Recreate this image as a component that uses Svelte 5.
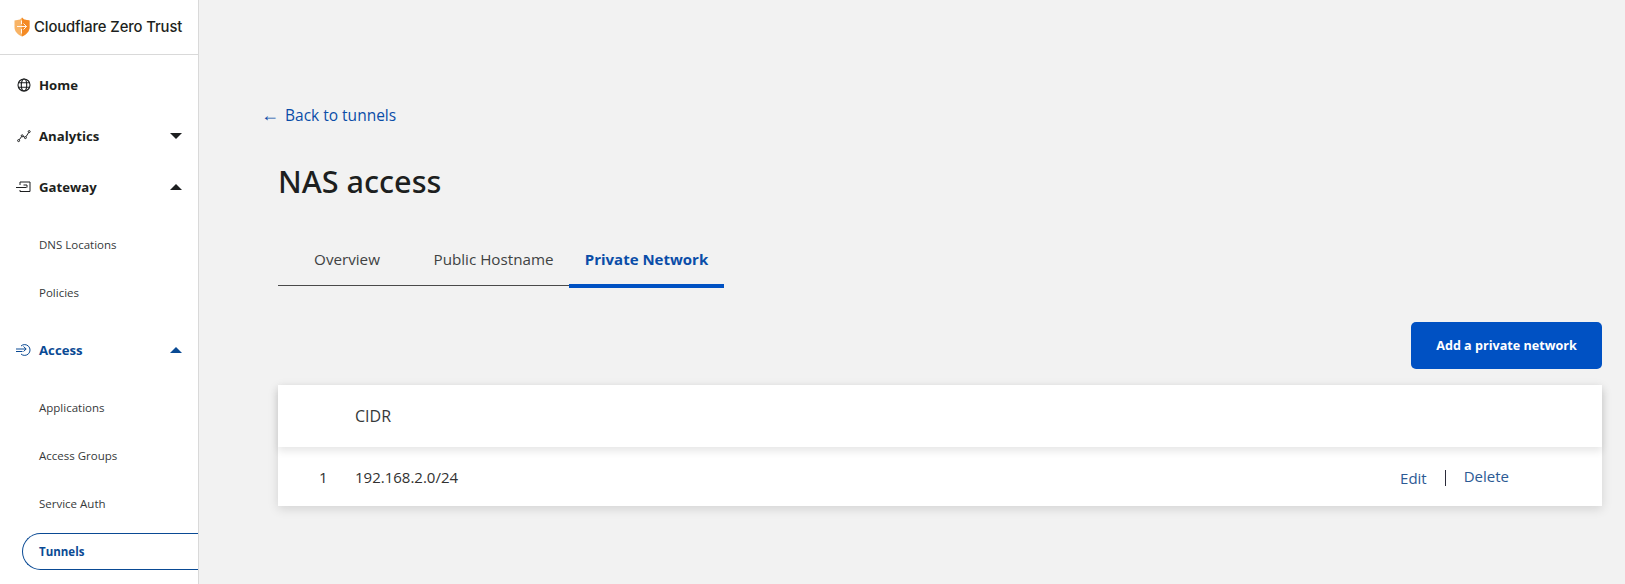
<script>
  const sub1 = ['DNS Locations', 'Policies'];
  const sub2 = ['Applications', 'Access Groups', 'Service Auth'];
</script>

<div class="page">
  <aside class="sidebar">
    <div class="brand">
      <svg class="logo" width="16" height="20" viewBox="0 0 16 20" aria-hidden="true">
        <path d="M8 0.5 L10 2.4 L15.5 3.4 V10.5 C15.5 14.5 12 17.8 8 19.5 C4 17.8 0.5 14.5 0.5 10.5 V3.4 L6 2.4 Z" fill="#f8b365"/>
        <path d="M8 0.5 L10 2.4 L15.5 3.4 V10.5 C15.5 14.5 12 17.8 8 19.5 Z" fill="#f48a24"/>
        <path d="M3 9.5 H12.5 M9.5 6.5 L12.5 9.5 L9.5 12.5 M7.5 3.5 V7 M7.5 12 V16.5" stroke="#fff" stroke-width="1" fill="none" opacity="0.9"/>
      </svg>
      <span>Cloudflare Zero Trust</span>
    </div>
    <nav class="nav">
      <div class="item top">
        <svg width="14" height="14" viewBox="0 0 14 14" fill="none" stroke="#1d1f20" stroke-width="1.1"><circle cx="7" cy="7" r="6"/><ellipse cx="7" cy="7" rx="2.7" ry="6"/><path d="M1.4 4.8H12.6M1.4 9.2H12.6"/></svg>
        <span>Home</span>
      </div>
      <div class="item top">
        <svg width="14" height="14" viewBox="0 0 14 14" fill="none" stroke="#1d1f20" stroke-width="1"><circle cx="1.6" cy="11.6" r="1"/><circle cx="5.2" cy="6.8" r="1"/><circle cx="8.4" cy="8.6" r="1"/><circle cx="12.2" cy="2.6" r="1"/><path d="M2.2 10.8L4.6 7.6M6.1 7.3L7.5 8.1M9 7.7L11.7 3.5"/></svg>
        <span>Analytics</span>
        <i class="caret down"></i>
      </div>
      <div class="item top">
        <svg width="16" height="14" viewBox="0 0 16 14" fill="none" stroke="#1d1f20" stroke-width="1"><path d="M4 5V2H14V11.5H4V10"/><path d="M0 7.5H10.5"/><path d="M7.5 5H11V7.5"/></svg>
        <span>Gateway</span>
        <i class="caret up"></i>
      </div>
      <div class="subs first">
        {#each sub1 as s}<div class="sub">{s}</div>{/each}
      </div>
      <div class="item top active">
        <svg width="16" height="14" viewBox="0 0 16 14" fill="none" stroke="#0a4a94" stroke-width="1"><path d="M5 3A5.4 5.4 0 1 1 5 11"/><path d="M0 6H10M7.5 3.5L10.2 6L7.5 8.5M0 8.5H6.5"/></svg>
        <span>Access</span>
        <i class="caret up blue"></i>
      </div>
      <div class="subs second">
        {#each sub2 as s}<div class="sub">{s}</div>{/each}
        <div class="sub current">Tunnels</div>
      </div>
    </nav>
  </aside>

  <main class="main">
    <a class="back" href="#top"><span class="arrow">←</span><span>Back to tunnels</span></a>
    <div class="content">
      <h1>NAS access</h1>
      <div class="tabs">
        <div class="tab t1">Overview</div>
        <div class="tab t2">Public Hostname</div>
        <div class="tab t3 selected">Private Network</div>
      </div>
      <div class="actions"><button>Add a private network</button></div>
      <div class="table">
        <div class="thead"><div class="num"></div><div class="cidr">CIDR</div></div>
        <div class="trow">
          <div class="num">1</div>
          <div class="cidr">192.168.2.0/24</div>
          <div class="ops"><a href="#top" class="edit">Edit</a><span class="sep"></span><a href="#top" class="del">Delete</a></div>
        </div>
      </div>
    </div>
  </main>
</div>

<style>
  :global(body) { margin: 0; background: #f2f2f2; }
  .page {
    display: flex; width: 1625px; height: 584px; overflow: hidden;
    font-family: "Open Sans", "Noto Sans", sans-serif; color: #1d1f20;
  }
  .sidebar {
    width: 198px; flex: none; background: #fff;
    border-right: 1px solid #d9d9d9; box-sizing: content-box;
  }
  .brand {
    height: 55px; box-sizing: border-box; border-bottom: 1px solid #d9d9d9;
    display: flex; align-items: center; gap: 4px; padding: 0 0 0 14px;
    font-family: Inter, sans-serif; font-size: 14.8px; font-weight: 500; color: #1d1f20;
    letter-spacing: -0.1px;
  }
  .logo { flex: none; margin-bottom: 1px; }
  .nav { display: flex; flex-direction: column; padding-top: 4px; }
  .item {
    position: relative; display: flex; align-items: center; height: 51px;
    padding-left: 16px; font-size: 13.2px; font-weight: 700;
  }
  .item svg { width: 16px; flex: none; margin-right: 7px; }
  .item.active { color: #0a4a94; }
  .caret {
    position: absolute; right: 16px; top: 50%; margin-top: -3px;
    width: 0; height: 0; border-left: 6.5px solid transparent; border-right: 6.5px solid transparent;
  }
  .caret.down { border-top: 6px solid #1d1f20; }
  .caret.up { border-bottom: 6px solid #1d1f20; }
  .caret.up.blue { border-bottom-color: #0a4a94; }
  .subs { display: flex; flex-direction: column; }
  .subs.first { padding: 8px 0 8px; }
  .subs.second { padding-top: 8px; }
  .sub {
    height: 48px; display: flex; align-items: center; padding-left: 39px;
    font-size: 11.5px; color: #36393a; box-sizing: border-box;
  }
  .sub.current {
    height: 37px; margin: 6px 0 0 22px; padding-left: 16px;
    border: 1px solid #0a4a94; border-right: none; border-radius: 19px 0 0 19px;
    color: #0a4a94; font-weight: 700;
  }
  .main { flex: 1; min-width: 0; padding: 103px 23px 0 64px; }
  .back {
    display: flex; align-items: center; height: 24px; color: #0a4da8;
    text-decoration: none; font-size: 15.5px;
  }
  .arrow { width: 24px; margin-left: -2px; font-size: 18px; font-family: "Liberation Sans", sans-serif; }
  .content { margin-left: 15px; }
  h1 {
    margin: 33px 0 0; font-size: 30.6px; line-height: 42px; font-weight: 500; color: #1d1f20;
    font-family: "Noto Sans", sans-serif;
  }
  .tabs {
    display: flex; align-items: flex-start; width: 446px; height: 46px; margin-top: 38px; box-sizing: border-box;
    border-bottom: 1px solid #4a4a4a; font-size: 15.2px; color: #404242;
  }
  .tab { display: flex; align-items: center; justify-content: center; height: 38px; }
  .t1 { width: 138px; }
  .t2 { width: 153px; padding-left: 2px; box-sizing: border-box; }
  .t3 { width: 155px; }
  .selected {
    height: 48px; box-sizing: border-box; padding-bottom: 6px; font-size: 15px;
    border-bottom: 4px solid #0051c3; color: #0a4da8; font-weight: 700;
  }
  .actions { display: flex; justify-content: flex-end; margin-top: 36px; }
  button {
    width: 191px; height: 47px; background: #0051c3; color: #fff; border: none; border-radius: 5px;
    font: 700 12.6px "Open Sans", sans-serif;
  }
  .table {
    margin-top: 16px; background: #fff; box-shadow: 0 3px 10px rgba(0,0,0,0.13);
  }
  .thead, .trow { display: flex; align-items: center; font-size: 15px; }
  .thead {
    height: 62px; position: relative; box-shadow: 0 4px 8px rgba(0,0,0,0.1); font-weight: 500; color: #36393a;
  }
  .thead .cidr { font-size: 16px; }
  .trow { height: 59px; color: #313131; }
  .num { width: 77px; box-sizing: border-box; padding-left: 41px; flex: none; }
  .cidr { flex: 1; }
  .ops { display: flex; align-items: center; padding-right: 93px; }
  .ops a { color: #2c5a94; text-decoration: none; }
  .edit { position: relative; top: 1px; }
  .del { position: relative; top: -1px; }
  .sep { width: 1px; height: 16px; background: #2b2b3a; margin: 2px 18px 0 18px; }
</style>
